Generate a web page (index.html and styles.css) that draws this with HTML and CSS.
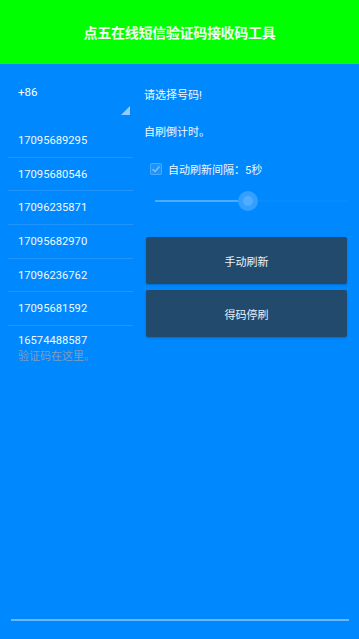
FILE: index.html
```html
<!DOCTYPE html>
<html lang="zh">
<head>
<meta charset="utf-8">
<link rel="stylesheet" href="styles.css">
</head>
<body>
<div class="app">
  <header class="header">点五在线短信验证码接收码工具</header>
  <main class="main">
    <section class="left">
      <div class="spinner">
        <span class="code">+86</span>
        <span class="arrow"></span>
      </div>
      <ul class="list">
        <li>17095689295</li>
        <li>17095680546</li>
        <li>17096235871</li>
        <li>17095682970</li>
        <li>17096236762</li>
        <li>17095681592</li>
        <li class="last">16574488587</li>
      </ul>
      <div class="hint">验证码在这里。</div>
    </section>
    <section class="right">
      <div class="label first">请选择号码!</div>
      <div class="label second">自刷倒计时。</div>
      <div class="check-row">
        <span class="checkbox">
          <svg width="12" height="12" viewBox="0 0 12 12"><rect x="0.5" y="0.5" width="11" height="11" rx="1" fill="rgba(255,255,255,0.1)" stroke="rgba(255,255,255,0.25)"/><path d="M2.5 6.2 L5 8.6 L9.6 3.3" fill="none" stroke="rgba(255,255,255,0.4)" stroke-width="1.5"/></svg>
        </span>
        <span class="check-text">自动刷新间隔：5秒</span>
      </div>
      <div class="slider">
        <div class="track-on"></div>
        <div class="thumb"><span class="dot"></span></div>
        <div class="track-off"></div>
      </div>
      <button class="btn first-btn">手动刷新</button>
      <button class="btn">得码停刷</button>
    </section>
  </main>
  <div class="bottom-line"></div>
</div>
</body>
</html>
```
FILE: styles.css
```css
* { box-sizing: border-box; }
html, body { margin: 0; padding: 0; }
body {
  width: 359px;
  height: 639px;
  background: #0088ff;
  font-family: Roboto, "Noto Sans CJK SC", sans-serif;
  color: #ffffff;
  overflow: hidden;
}
.app {
  height: 639px;
  display: flex;
  flex-direction: column;
}
.header {
  height: 64px;
  flex: none;
  background: #00ff00;
  display: flex;
  align-items: center;
  justify-content: center;
  font-size: 14px;
  font-weight: bold;
  color: #f4fff0;
  letter-spacing: -0.3px;
}
.main {
  flex: 1;
  display: flex;
}
.left {
  width: 125px;
  margin-left: 8px;
  flex: none;
}
.spinner {
  height: 60px;
  position: relative;
  padding: 20px 0 0 10px;
  font-size: 11.5px;
  line-height: 16px;
}
.arrow {
  position: absolute;
  right: 3px;
  top: 42px;
  width: 0;
  height: 0;
  border-left: 9px solid transparent;
  border-bottom: 9px solid rgba(200, 225, 255, 0.75);
}
.list {
  list-style: none;
  margin: 0;
  padding: 0;
}
.list li {
  height: 33.7px;
  line-height: 33.7px;
  padding-left: 10px;
  font-size: 11.2px;
  border-bottom: 1px solid rgba(255, 255, 255, 0.12);
  color: #f2f8ff;
}
.list li.last {
  height: 25px;
  line-height: 20px;
  padding-top: 5px;
  border-bottom: none;
}
.hint {
  padding-left: 10px;
  font-size: 11px;
  line-height: 14px;
  color: rgba(150, 162, 178, 0.85);
  margin-top: -1px;
}
.right {
  flex: 1;
  padding-left: 11px;
  padding-right: 12px;
}
.label {
  font-size: 11px;
  line-height: 16px;
  color: #f2f8ff;
}
.label.first { margin-top: 24px; }
.label.second { margin-top: 21px; }
.check-row {
  margin-top: 20px;
  display: flex;
  align-items: center;
  height: 16px;
  padding-left: 6px;
  gap: 6px;
}
.checkbox {
  display: flex;
  width: 12px;
  height: 12px;
}
.check-text {
  font-size: 11px;
  color: #eef6ff;
}
.slider {
  margin-top: 14px;
  height: 20px;
  display: flex;
  align-items: center;
  padding-left: 11px;
}
.track-on {
  width: 83px;
  height: 2px;
  background: rgba(255, 255, 255, 0.3);
}
.thumb {
  width: 20px;
  height: 20px;
  border-radius: 50%;
  background: rgba(255, 255, 255, 0.2);
  display: flex;
  align-items: center;
  justify-content: center;
  flex: none;
}
.dot {
  width: 10px;
  height: 10px;
  border-radius: 50%;
  background: rgba(255, 255, 255, 0.15);
}
.track-off {
  flex: 1;
  height: 2px;
  background: rgba(255, 255, 255, 0.03);
}
.btn {
  display: block;
  width: 201px;
  height: 47px;
  margin-left: 2px;
  border: none;
  border-radius: 2px;
  background: #224a6d;
  color: #eaf2fa;
  font-family: "Noto Sans CJK SC", sans-serif;
  font-size: 11px;
  margin-top: 6px;
  box-shadow: 0 1px 2px rgba(0, 40, 90, 0.3);
}
.btn.first-btn { margin-top: 26px; }
.bottom-line {
  flex: none;
  height: 2px;
  margin: 0 10px 18px 11px;
  background: rgba(140, 200, 255, 0.75);
}
```
